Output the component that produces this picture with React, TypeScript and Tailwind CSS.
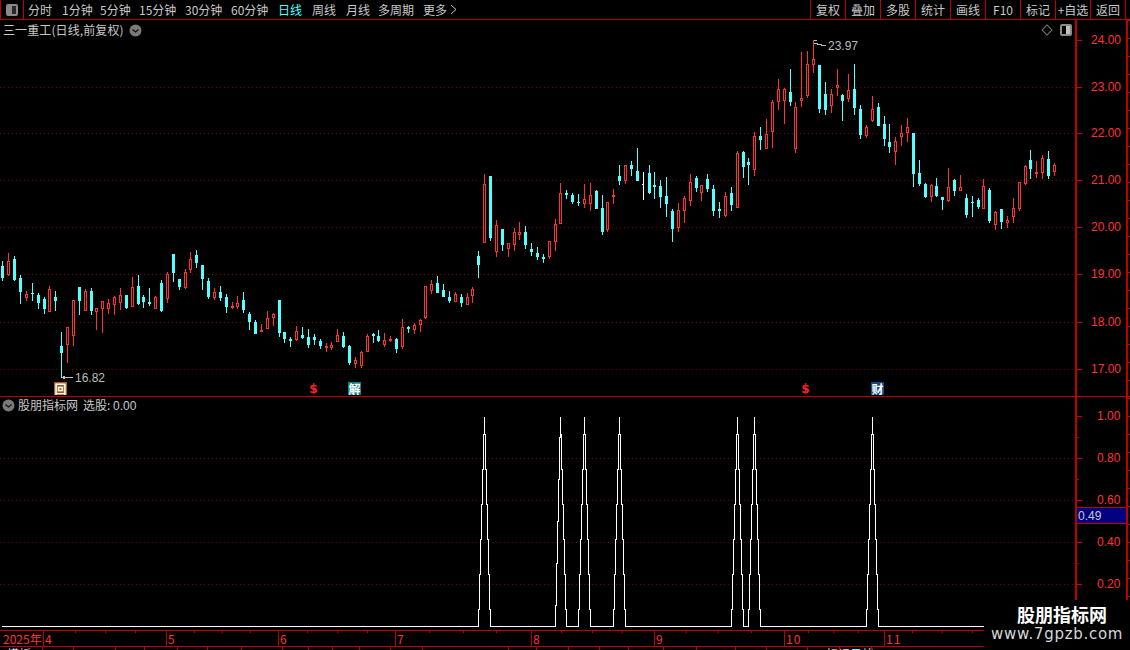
import type { ReactNode } from "react";

// [x, high, bodyTop, bodyBottom, low] in screen pixels, kind in the last slot
type Candle = [number, number, number, number, number, "r" | "c" | "w"];

const candles: Candle[] = [
  [2, 261, 266, 278, 281, "c"], [8, 253, 261, 275, 276, "r"], [14, 256, 259, 280, 281, "c"], [20, 275, 278, 292, 304, "c"],
  [26, 291, 294, 298, 301, "r"], [32, 283, 293, 294, 301, "c"], [38, 293, 295, 303, 309, "c"], [44, 297, 299, 309, 314, "c"],
  [49, 286, 289, 312, 312, "r"], [55, 291, 297, 301, 311, "c"], [61, 332, 346, 353, 378, "c"], [67, 327, 327, 345, 363, "r"],
  [73, 300, 300, 336, 346, "r"], [79, 287, 287, 301, 315, "c"], [85, 289, 291, 311, 311, "r"], [91, 288, 291, 311, 315, "c"],
  [96, 308, 308, 312, 330, "r"], [102, 301, 301, 309, 333, "r"], [108, 299, 303, 309, 314, "r"], [114, 296, 297, 305, 315, "r"],
  [120, 288, 295, 303, 310, "r"], [126, 295, 295, 308, 309, "c"], [132, 277, 287, 307, 307, "r"], [138, 275, 286, 304, 305, "c"],
  [143, 295, 297, 302, 308, "c"], [149, 288, 302, 304, 306, "c"], [155, 296, 297, 309, 309, "r"], [161, 280, 283, 311, 312, "c"],
  [167, 272, 274, 299, 303, "r"], [173, 254, 254, 273, 282, "c"], [179, 279, 279, 287, 290, "c"], [185, 269, 272, 288, 289, "r"],
  [190, 252, 259, 270, 273, "r"], [196, 250, 255, 263, 268, "c"], [202, 265, 265, 279, 290, "c"], [208, 278, 281, 297, 299, "c"],
  [214, 288, 292, 298, 300, "r"], [220, 286, 292, 298, 301, "c"], [226, 294, 297, 307, 313, "c"], [232, 302, 306, 308, 309, "r"],
  [237, 296, 303, 307, 309, "r"], [243, 292, 300, 310, 313, "c"], [249, 312, 314, 322, 330, "c"], [255, 320, 322, 334, 334, "c"],
  [261, 324, 330, 332, 332, "r"], [267, 311, 318, 329, 329, "r"], [273, 313, 314, 318, 326, "r"], [279, 300, 300, 333, 337, "c"],
  [284, 332, 332, 339, 343, "c"], [290, 337, 339, 341, 347, "c"], [296, 326, 331, 340, 341, "r"], [302, 327, 335, 338, 339, "c"],
  [308, 329, 337, 345, 348, "c"], [314, 334, 337, 340, 345, "c"], [320, 339, 341, 346, 349, "c"], [326, 343, 346, 348, 352, "r"],
  [331, 342, 345, 348, 350, "r"], [337, 329, 335, 342, 342, "r"], [343, 332, 336, 347, 348, "c"], [349, 345, 346, 363, 365, "c"],
  [355, 357, 360, 364, 368, "r"], [361, 351, 352, 366, 368, "r"], [367, 334, 336, 352, 352, "r"], [373, 333, 334, 336, 343, "c"],
  [378, 330, 336, 341, 342, "c"], [384, 333, 340, 345, 347, "r"], [390, 336, 339, 341, 342, "r"], [396, 338, 339, 349, 353, "c"],
  [402, 319, 327, 347, 349, "r"], [408, 326, 327, 329, 333, "c"], [414, 323, 325, 330, 334, "r"], [420, 319, 320, 325, 332, "r"],
  [425, 286, 286, 318, 319, "r"], [431, 280, 284, 291, 294, "r"], [437, 276, 283, 293, 293, "c"], [443, 284, 290, 297, 297, "c"],
  [449, 291, 297, 301, 303, "c"], [455, 292, 294, 302, 302, "r"], [461, 294, 297, 303, 307, "c"], [467, 293, 297, 305, 305, "r"],
  [472, 287, 289, 296, 303, "r"], [478, 251, 256, 265, 278, "c"], [484, 174, 184, 243, 243, "r"], [490, 176, 176, 238, 241, "c"],
  [496, 220, 225, 252, 257, "r"], [502, 229, 229, 245, 251, "c"], [508, 243, 243, 249, 257, "r"], [514, 228, 232, 245, 251, "r"],
  [519, 222, 232, 235, 240, "r"], [525, 226, 232, 245, 249, "c"], [531, 243, 249, 252, 256, "c"], [537, 247, 253, 257, 260, "c"],
  [543, 254, 257, 259, 263, "c"], [549, 241, 241, 257, 259, "r"], [555, 219, 224, 242, 251, "r"], [560, 183, 193, 224, 224, "r"],
  [566, 190, 193, 195, 199, "c"], [572, 193, 195, 202, 204, "c"], [578, 194, 202, 203, 206, "c"], [584, 184, 199, 204, 208, "r"],
  [590, 183, 195, 204, 211, "r"], [596, 190, 191, 209, 209, "c"], [602, 195, 208, 232, 235, "c"], [607, 202, 202, 230, 232, "r"],
  [613, 189, 195, 196, 204, "r"], [619, 165, 176, 181, 185, "c"], [625, 165, 165, 181, 184, "r"], [631, 161, 165, 169, 176, "c"],
  [637, 148, 171, 181, 181, "c"], [643, 172, 184, 185, 200, "w"], [649, 165, 173, 193, 194, "c"], [654, 172, 185, 187, 199, "c"],
  [660, 180, 186, 197, 208, "c"], [666, 177, 196, 204, 217, "c"], [672, 209, 211, 229, 242, "c"], [678, 203, 210, 228, 232, "r"],
  [684, 196, 198, 211, 223, "r"], [690, 174, 182, 201, 206, "r"], [696, 176, 178, 188, 192, "c"], [701, 185, 185, 193, 201, "r"],
  [707, 174, 179, 189, 192, "c"], [713, 185, 189, 211, 216, "c"], [719, 202, 209, 211, 218, "c"], [725, 192, 196, 216, 217, "r"],
  [731, 187, 193, 205, 211, "c"], [737, 151, 153, 208, 208, "r"], [743, 151, 152, 167, 178, "c"], [748, 158, 162, 165, 185, "c"],
  [754, 132, 136, 170, 176, "r"], [760, 127, 136, 140, 150, "c"], [766, 119, 134, 149, 149, "r"], [772, 100, 102, 132, 148, "r"],
  [778, 79, 89, 102, 110, "r"], [784, 88, 89, 101, 124, "r"], [790, 69, 92, 102, 106, "c"], [795, 102, 107, 149, 153, "r"],
  [801, 52, 98, 101, 107, "r"], [807, 51, 64, 96, 98, "r"], [813, 40, 59, 65, 73, "r"], [819, 65, 65, 109, 113, "c"],
  [825, 82, 94, 110, 115, "c"], [831, 89, 94, 106, 113, "r"], [837, 69, 85, 88, 96, "r"], [842, 94, 95, 101, 121, "c"],
  [848, 74, 90, 99, 102, "r"], [854, 64, 89, 108, 115, "c"], [860, 105, 109, 135, 139, "c"], [866, 125, 127, 136, 138, "r"],
  [872, 96, 109, 121, 122, "r"], [878, 103, 107, 126, 126, "c"], [884, 116, 124, 139, 146, "c"], [889, 124, 142, 147, 153, "c"],
  [895, 137, 141, 152, 165, "r"], [901, 125, 133, 137, 146, "r"], [907, 118, 127, 133, 142, "r"], [913, 133, 133, 174, 187, "c"],
  [919, 160, 173, 184, 186, "c"], [925, 183, 184, 197, 198, "c"], [931, 184, 185, 197, 202, "r"], [936, 178, 186, 196, 197, "c"],
  [942, 197, 197, 200, 210, "c"], [948, 168, 187, 201, 202, "r"], [954, 179, 180, 191, 196, "c"], [960, 175, 187, 191, 191, "r"],
  [966, 194, 198, 215, 218, "c"], [972, 196, 202, 203, 217, "c"], [978, 198, 200, 207, 209, "c"], [983, 179, 186, 209, 209, "r"],
  [989, 188, 190, 221, 223, "c"], [995, 211, 212, 225, 230, "r"], [1001, 209, 209, 222, 229, "c"], [1007, 216, 220, 223, 228, "r"],
  [1013, 198, 208, 217, 223, "r"], [1019, 182, 182, 209, 211, "r"], [1025, 165, 166, 184, 185, "r"], [1030, 150, 160, 169, 179, "c"],
  [1036, 161, 172, 174, 178, "r"], [1042, 155, 158, 173, 179, "r"], [1048, 151, 159, 176, 179, "c"], [1054, 163, 165, 172, 176, "r"],
];

const RED = "#ff3232";
const CYAN = "#54ffff";

const peaks = [484, 560, 584, 619, 737, 754, 872];
const climbLevels = [609, 574, 539, 504, 469, 434];
const steepLevels = [605, 563, 521, 479, 437];
const fallLevels = [469, 504, 539, 574, 609, 626];

// the signal line: flat on 0, stair-stepped up to 1 and back down at every hit
const signalPath = () => {
  let d = "M2 626.5";
  peaks.forEach((p) => {
    const climb = p === 560 ? steepLevels : climbLevels;
    let x = p - climb.length + 0.5;
    d += `H${x}`;
    climb.forEach((y) => {
      d += `V${y + 0.5}H${x + 1}`;
      x += 1;
    });
    d += "V416.5V434.5";
    fallLevels.forEach((y) => {
      x += 1;
      d += `H${x}V${y + 0.5}`;
    });
  });
  return `${d}H984`;
};

const periods = [
  { label: "分时", w: "w-[34px]" },
  { label: "1分钟", w: "w-[38px]" },
  { label: "5分钟", w: "w-[39px]" },
  { label: "15分钟", w: "w-[46px]" },
  { label: "30分钟", w: "w-[46px]" },
  { label: "60分钟", w: "w-[47px]" },
  { label: "日线", w: "w-[34px]" },
  { label: "周线", w: "w-[34px]" },
  { label: "月线", w: "w-[32px]" },
  { label: "多周期", w: "w-[45px]" },
];
const tools = ["复权", "叠加", "多股", "统计", "画线", "F10", "标记", "+自选", "返回"];
const prices = ["24.00", "23.00", "22.00", "21.00", "20.00", "19.00", "18.00", "17.00"];
const priceY = [40, 87, 133, 180, 227, 274, 322, 369];
const ratios = ["1.00", "0.80", "0.60", "0.40", "0.20"];
const ratioY = [416, 458, 500, 542, 584];
const minorTicks = [437, 479, 563];
const months = [
  { label: "2025年", w: "w-[44px]" },
  { label: "4", w: "w-[123px]" },
  { label: "5", w: "w-[112px]" },
  { label: "6", w: "w-[117px]" },
  { label: "7", w: "w-[136px]" },
  { label: "8", w: "w-[123px]" },
  { label: "9", w: "w-[130px]" },
  { label: "10", w: "w-[100px]" },
  { label: "11", w: "w-[110px]" },
];
const dateTicks = [75, 105, 135, 194, 222, 250, 307, 337, 367, 429, 463, 496, 561, 592, 622, 686, 718, 751, 808, 833, 858, 912, 942, 972];
const lowerTicks = [42, 73, 115, 144, 177, 207, 241, 282, 308, 332, 359, 390, 422, 508, 536, 568, 599, 628, 663, 696, 735, 766, 807, 839, 871];

const PanelToggle = ({ flip = false }: { flip?: boolean }) => (
  <span className="w-[12px] h-[12px] rounded-[2px] border-2 border-[#8a8a8a] flex">
    <span className={`flex-1 ${flip ? "bg-[#8a8a8a]" : "bg-black"}`} />
    <span className={`flex-1 ${flip ? "bg-[#2a2a2a]" : "bg-[#c0c0c0]"}`} />
  </span>
);

const DownBadge = () => (
  <svg width="13" height="13" viewBox="0 0 13 13" className="shrink-0">
    <circle cx="6.5" cy="6.5" r="6" fill="#7a7a7a" />
    <path d="M3.5 5.5l3 2.5 3-2.5" fill="none" stroke="#111" strokeWidth="1.3" />
  </svg>
);

const Marker = ({ x, className, children }: { x: string; className: string; children: ReactNode }) => (
  <span className={`absolute top-[362px] ${x} w-[13px] h-[13px] flex items-center justify-center leading-none text-[12px] ${className}`}>
    {children}
  </span>
);

const App = () => {
  return (
    <div className="relative w-[1130px] h-[650px] bg-black overflow-hidden flex flex-col font-['Noto_Sans_CJK_SC','Liberation_Sans',sans-serif] text-[12px] text-[#c8c8c8]">
      {/* top toolbar */}
      <div className="h-[20px] shrink-0 flex items-center border-b border-[#c00000] leading-none">
        <div className="w-[24px] h-full shrink-0 border-l border-r border-[#c00000] flex items-center justify-center">
          <PanelToggle flip />
        </div>
        <div className="flex items-center ml-[4px]">
          {periods.map((p) => (
            <span key={p.label} className={`${p.w} ${p.label === "日线" ? "text-[#54ffff]" : ""}`}>
              {p.label}
            </span>
          ))}
          <span className="flex items-center gap-[3px]">
            更多
            <svg width="8" height="11" viewBox="0 0 8 11">
              <path d="M1 1l5 4.5-5 4.5" fill="none" stroke="#c8c8c8" />
            </svg>
          </span>
        </div>
        <div className="ml-auto mr-[4px] flex h-full border-l border-[#c00000]">
          {tools.map((t) => (
            <span key={t} className="w-[35px] h-full border-r border-[#c00000] flex items-center justify-center whitespace-nowrap">
              {t}
            </span>
          ))}
        </div>
      </div>

      {/* price chart */}
      <div className="relative h-[377px] shrink-0 border-b border-[#c00000]">
        <div className="h-[20px] pl-[3px] flex items-center gap-[5px] leading-none">
          <span className="tracking-[0.1px]">三一重工(日线,前复权)</span>
          <DownBadge />
        </div>
        <div className="absolute top-[4px] left-[1043px] flex items-center gap-[9px]">
          <span className="w-[8px] h-[8px] rotate-45 border border-[#777]" />
          <PanelToggle />
        </div>
        <svg width="1076" height="377" viewBox="0 20 1076 377" className="absolute left-0 top-0" shapeRendering="crispEdges">
          {priceY.slice(1).map((y) => (
            <line key={y} x1="0" x2="1075" y1={y + 0.5} y2={y + 0.5} stroke="#780000" strokeDasharray="1 3" />
          ))}
          {candles.map(([x, hi, top, bottom, lo, kind], i) => {
            const color = kind === "r" ? RED : kind === "c" ? CYAN : "#ffffff";
            return (
              <g key={i}>
                <line x1={x + 0.5} x2={x + 0.5} y1={hi} y2={lo} stroke={color} />
                {kind === "r" ? (
                  <rect x={x - 0.5} y={top + 0.5} width="2" height={Math.max(bottom - top - 1, 1)} fill="#000" stroke={color} />
                ) : kind === "c" ? (
                  <rect x={x - 1} y={top} width="3" height={Math.max(bottom - top, 1)} fill={color} />
                ) : (
                  <rect x={x - 1} y={top} width="2" height="1" fill={color} />
                )}
              </g>
            );
          })}
          <path d="M62 377.5h11M62.5 377.5l3-2M62.5 377.5l3 2M813.5 40.5h3M813.5 43.5h3l2 1h2l2 1h3" fill="none" stroke="#bdbdbd" />
        </svg>
        <span className="absolute left-[75px] top-[352px] leading-none text-[#bdbdbd] font-['Liberation_Sans',sans-serif]">16.82</span>
        <span className="absolute left-[828px] top-[20px] leading-none text-[#bdbdbd] font-['Liberation_Sans',sans-serif]">23.97</span>
        <Marker x="left-[54px]" className="bg-[#a85a14] text-white font-bold">回</Marker>
        <Marker x="left-[307px]" className="text-[#ff2020] font-bold font-['DejaVu_Sans',sans-serif]">$</Marker>
        <Marker x="left-[348px]" className="bg-[#0e7c80] text-white font-bold">解</Marker>
        <Marker x="left-[799px]" className="text-[#ff2020] font-bold font-['DejaVu_Sans',sans-serif]">$</Marker>
        <Marker x="left-[871px]" className="bg-[#0c4a80] text-white font-bold">财</Marker>

        {/* price scale */}
        <div className="absolute left-[1075px] top-0 bottom-0 w-[53px] border-l-2 border-r-2 border-[#c00000] font-['Liberation_Sans',sans-serif]">
          {prices.map((p, i) => (
            <div key={p} className="absolute left-0 right-0 flex items-center h-[14px] leading-none text-[#ff3232]" style={{ top: priceY[i] - 27 }}>
              <span className="w-[5px] h-px bg-[#c00000]" />
              <span className="ml-[9px]">{p}</span>
            </div>
          ))}
        </div>
      </div>

      {/* indicator panel */}
      <div className="relative h-[234px] shrink-0 border-b border-[#c00000]">
        <div className="h-[16px] pl-[2px] flex items-center gap-[3px] leading-none">
          <DownBadge />
          <span>股朋指标网</span>
          <span className="ml-[2px]">
            选股: <span className="font-['Liberation_Sans',sans-serif]">0.00</span>
          </span>
        </div>
        <svg width="1076" height="233" viewBox="0 397 1076 233" className="absolute left-0 top-0" shapeRendering="crispEdges">
          {ratioY.slice(1).map((y) => (
            <line key={y} x1="0" x2="1075" y1={y + 0.5} y2={y + 0.5} stroke="#780000" strokeDasharray="1 3" />
          ))}
          <path d={signalPath()} fill="none" stroke="#fff" />
        </svg>
        <div className="absolute left-[1075px] top-0 bottom-0 w-[53px] border-l-2 border-r-2 border-[#c00000] font-['Liberation_Sans',sans-serif]">
          {ratios.map((r, i) => (
            <div key={r} className="absolute left-0 right-0 flex items-center h-[14px] leading-none text-[#ff3232]" style={{ top: ratioY[i] - 404 }}>
              <span className="w-[5px] h-px bg-[#c00000]" />
              <span className="ml-[15px]">{r}</span>
            </div>
          ))}
          {minorTicks.map((y) => (
            <span key={y} className="absolute left-0 w-[2px] h-px bg-[#c00000]" style={{ top: y - 397 }} />
          ))}
          <div className="absolute left-0 right-0 top-[110px] h-[17px] pl-[1px] flex items-center bg-[#000080] border-y border-[#c00000] text-[#c8c8c8] leading-none">
            0.49
          </div>
        </div>
      </div>

      {/* right edge tick strip */}
      <div className="absolute left-[1128px] top-[20px] w-[2px] h-[580px] bg-[repeating-linear-gradient(to_bottom,#c00000_0,#c00000_1px,transparent_1px,transparent_18px)]" />

      {/* date axis */}
      <div className="relative h-[16px] shrink-0 border-b border-[#c00000] flex text-[#ff3232] leading-none">
        {months.map((m, i) => (
          <span key={m.label} className={`${m.w} h-full flex items-center border-r border-[#c00000] ${i === 0 ? "pl-[3px]" : "pl-[1px]"} ${m.label.length === 2 ? "tracking-[1px]" : ""}`}>
            {m.label}
          </span>
        ))}
        {dateTicks.map((x) => (
          <span key={x} className="absolute top-0 w-px h-[2px] bg-[#c00000]" style={{ left: x }} />
        ))}
      </div>

      {/* next row, mostly cut off by the window */}
      <div className="relative flex-1 overflow-hidden leading-none">
        <span className="absolute left-[7px] top-[1px]">模板</span>
        <span className="absolute left-[826px] top-[1px]">标记</span>
        <span className="absolute left-[850px] top-[1px] text-[#54ffff]">日线</span>
        {lowerTicks.map((x) => (
          <span key={x} className="absolute top-0 bottom-0 w-px bg-[#c00000]" style={{ left: x }} />
        ))}
      </div>

      {/* watermark */}
      <div className="absolute left-[984px] top-[600px] w-[146px] h-[50px] bg-black flex flex-col pt-[3px] leading-none">
        <span className="pl-[33px] text-[18px] font-bold text-white leading-[22px] whitespace-nowrap">股朋指标网</span>
        <span className="pl-[7px] text-[15px] font-['DejaVu_Sans',sans-serif] text-[#d8d8d8] leading-[18px] tracking-[0.7px] whitespace-nowrap">www.7gpzb.com</span>
      </div>
    </div>
  );
};

export default App;
